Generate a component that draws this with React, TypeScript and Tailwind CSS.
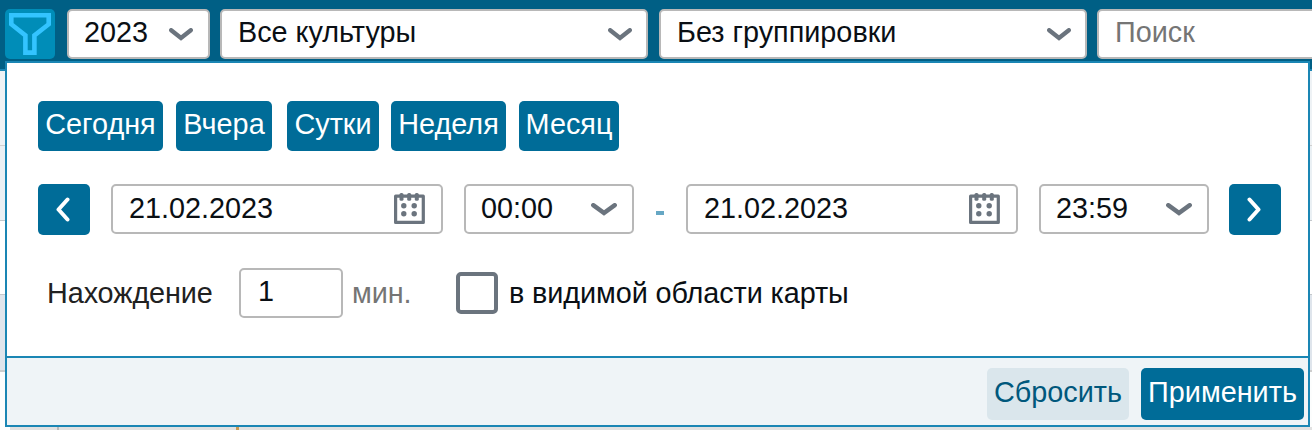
import type { ReactNode } from 'react';
import clsx from 'clsx';

const presets = [
  { label: 'Сегодня', className: 'w-[125px]' },
  { label: 'Вчера', className: 'ml-[13px] w-[96px]' },
  { label: 'Сутки', className: 'ml-[15px] w-[92px]' },
  { label: 'Неделя', className: 'ml-3 w-[115px]' },
  { label: 'Месяц', className: 'ml-[13px] w-[100px]' },
];

function ChevronDown({ className }: { className?: string }) {
  return (
    <svg viewBox="0 0 24 13" className={clsx('h-[13px] shrink-0', className)} preserveAspectRatio="none" fill="none">
      <path d="M2.2 2.2L12 10L21.8 2.2" stroke="#6b747e" strokeWidth="4.3" strokeLinecap="round" />
    </svg>
  );
}

function FilterIcon() {
  return (
    <svg width="42" height="42" viewBox="0 0 42 42" fill="none" stroke="#33c4ff" strokeWidth="4.6">
      <path d="M2.3 2.3H39.7V11.2L25.4 22.4V39.6H16.4V22.4L2.3 11.2Z" />
    </svg>
  );
}

function CalendarIcon() {
  return (
    <svg width="31" height="32" viewBox="0 0 31 32" fill="#6b747e">
      <path d="M1.6 3.2H29.3V29.4H1.6Z" fill="none" stroke="#6b747e" strokeWidth="3.2" strokeLinejoin="round" />
      <rect x="5.5" y="0" width="4" height="7.8" rx="1.6" />
      <rect x="13.2" y="0" width="4" height="7.8" rx="1.6" />
      <rect x="20.8" y="0" width="4" height="7.8" rx="1.6" />
      <circle cx="9.8" cy="12.8" r="2.7" />
      <circle cx="20.2" cy="12.8" r="2.7" />
      <circle cx="9.8" cy="20.7" r="2.7" />
      <circle cx="20.2" cy="20.7" r="2.7" />
    </svg>
  );
}

function Field({ className, children }: { className?: string; children?: ReactNode }) {
  return (
    <div className={clsx('flex h-[50px] shrink-0 items-center rounded-[5px] border-2 border-[#b8b8b8] bg-white', className)}>
      {children}
    </div>
  );
}

function DateField({ value }: { value: string }) {
  return (
    <Field className="w-[332px] justify-between pr-4 pl-4">
      <span className="pb-0.5">{value}</span>
      <CalendarIcon />
    </Field>
  );
}

function TimeField({ value }: { value: string }) {
  return (
    <Field className="w-[170px] justify-between pr-[15px] pl-[15px]">
      <span className="pb-0.5">{value}</span>
      <ChevronDown className="w-[26px]" />
    </Field>
  );
}

function ArrowButton({ d, className }: { d: string; className?: string }) {
  return (
    <button className={clsx('flex h-[51px] w-[52px] shrink-0 items-center justify-center rounded-[5px] bg-[#006c98] pr-0.5', className)}>
      <svg width="14" height="25" viewBox="0 0 14 25" fill="none" stroke="white" strokeWidth="4" strokeLinecap="round" strokeLinejoin="round">
        <path d={d} />
      </svg>
    </button>
  );
}

export default function App() {
  return (
    <div className="relative h-[430px] w-full overflow-hidden bg-white font-['Liberation_Sans',Arial,sans-serif] text-[28.8px] leading-[34px] whitespace-nowrap text-[#0a0f14]">
      {/* Toolbar */}
      <header className="flex h-[71px] items-start overflow-hidden border-b-2 border-[#1a86b4] bg-[#005f85] pt-[9px] pl-[5px]">
        <button className="flex size-[50px] shrink-0 items-center justify-center rounded-[5px] bg-[#008db8]">
          <FilterIcon />
        </button>
        <Field className="ml-3 w-[143px] justify-between pr-[15px] pl-[15px]">
          <span className="pb-1">2023</span>
          <ChevronDown className="w-6" />
        </Field>
        <Field className="ml-[10px] w-[428px] justify-between pr-[14px] pl-4">
          <span className="pb-1">Все культуры</span>
          <ChevronDown className="w-6" />
        </Field>
        <Field className="ml-[11px] w-[428px] justify-between pr-[14px] pl-4">
          <span className="pb-1">Без группировки</span>
          <ChevronDown className="w-6" />
        </Field>
        <Field className="ml-[10px] w-[300px] pl-4 text-[#757575]">
          <span className="pb-1">Поиск</span>
        </Field>
      </header>

      {/* List rows behind the panel */}
      <div className="h-[75px] border-b border-[#d0d0d0] bg-[#eef2f5]" />
      <div className="h-[75px] border-b border-[#c4c8cc] bg-[#eaf0f4]" />
      <div className="h-[74px] border-b border-[#c4c8cc] bg-white" />
      <div className="h-[77px] border-b-2 border-[#cdcdcd] bg-[#dfe5ec]" />
      <div className="flex h-[58px] items-end bg-[#fcfdfd]">
        <div className="ml-[10px] flex h-[3px] flex-1 bg-[#e1e1e1]">
          <div className="ml-[47px] w-0.5 bg-[#b9b9b9]" />
          <div className="ml-[177px] w-[3px] bg-[#c99a50]" />
        </div>
      </div>

      {/* Filter panel */}
      <section className="absolute top-[61px] left-[5px] flex h-[366px] w-[1305px] flex-col border-2 border-[#1a86b4] bg-white">
        <div className="flex flex-1 flex-col pt-[38px] pl-[31px]">
          <div className="flex text-white">
            {presets.map((preset) => (
              <button key={preset.label} className={clsx('h-[50px] rounded-[5px] bg-[#006c98] pb-1', preset.className)}>
                {preset.label}
              </button>
            ))}
          </div>

          <div className="mt-[33px] flex items-start">
            <ArrowButton d="M11.5 2.5L2.5 12.5L11.5 22.5" />
            <div className="ml-[21px] flex items-center">
              <DateField value="21.02.2023" />
              <div className="w-[21px]" />
              <TimeField value="00:00" />
              <div className="mt-2 ml-[22px] h-1 w-2 bg-[#66a7c4]" />
              <div className="w-[22px]" />
              <DateField value="21.02.2023" />
              <div className="w-[21px]" />
              <TimeField value="23:59" />
            </div>
            <ArrowButton d="M2.5 2.5L11.5 12.5L2.5 22.5" className="ml-5" />
          </div>

          <div className="mt-[33px] flex items-center pl-[9px] tracking-[-0.09px]">
            <span className="w-[192px] text-[#212121]">Нахождение</span>
            <Field className="w-[104px] pl-[17px]">
              <span className="pb-1">1</span>
            </Field>
            <span className="ml-[9px] w-[104px] text-[#757575]">мин.</span>
            <span className="size-[42px] rounded-[5px] border-4 border-[#6b747e] bg-white" />
            <span className="ml-[11px]">в видимой области карты</span>
          </div>
        </div>

        <footer className="flex h-[69px] items-start justify-end border-t-2 border-[#1a86b4] bg-[#eff4f7] pt-[10px] pr-1">
          <button className="h-[52px] w-[142px] rounded-[5px] bg-[#dae6ec] pb-1 text-[#00587c]">Сбросить</button>
          <button className="ml-3 h-[52px] w-[163px] rounded-[5px] bg-[#006c98] pb-1 text-white">Применить</button>
        </footer>
      </section>
    </div>
  );
}
